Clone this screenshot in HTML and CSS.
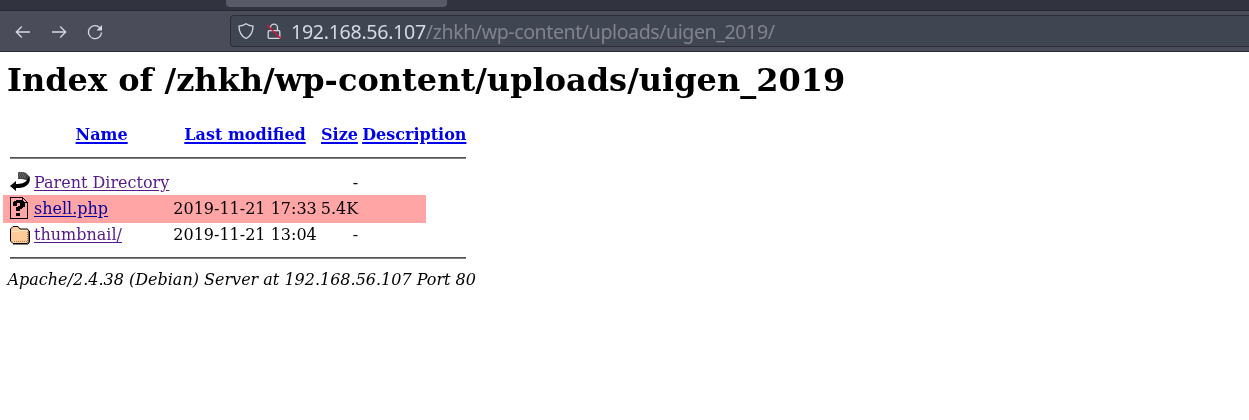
FILE: index.html
```html
<!DOCTYPE html>
<html lang="en">
<head>
<meta charset="utf-8">
<title>Index of /zhkh/wp-content/uploads/uigen_2019</title>
<link rel="stylesheet" href="styles.css">
</head>
<body>
<header class="chrome">
  <div class="tabs"><div class="tab"></div></div>
  <div class="toolbar">
    <nav class="nav">
      <svg class="nav-icon" viewBox="0 0 16 16"><path d="M15 8H1.500M6.800 2.500 1.300 8l5.500 5.500"/></svg>
      <svg class="nav-icon" viewBox="0 0 16 16"><path d="M1 8h13.500M9.200 2.500 14.700 8l-5.500 5.500"/></svg>
      <svg class="nav-icon" viewBox="0 0 16 16"><path d="M12.800 3.800A6.500 6.500 0 1 0 14.500 8.500"/><path class="solid" d="M15 1v5.500H9.500z"/></svg>
    </nav>
    <div class="urlbar">
      <svg class="url-icon shield" viewBox="0 0 16 16"><path d="M8 .8C6 2.200 3.600 3 1 3.200c0 5.500 1.500 9.500 7 12.300 5.500-2.800 7-6.800 7-12.300C12.400 3 10 2.200 8 .8z"/></svg>
      <svg class="url-icon lock" viewBox="0 0 16 16"><path d="M4.500 4.700a3.500 3.500 0 0 1 7 0v2.800M3.200 7.700h9.600q1 0 1 1v5.600q0 1-1 1H3.200q-1 0-1-1V8.700q0-1 1-1z"/><path class="strike" d="M1.300 2.300 15 15.800"/></svg>
      <span class="url"><span class="host">192.168.56.107</span><span class="path">/zhkh/wp-content/uploads/uigen_2019/</span></span>
    </div>
  </div>
</header>
<main class="page">
  <h1 class="title">Index of /zhkh/wp-content/uploads/uigen_2019</h1>
  <table class="listing">
    <tr><th><div class="icon"></div></th><th><a class="link" href="#">Name</a></th><th><a class="link" href="#">Last modified</a></th><th><a class="link" href="#">Size</a></th><th><a class="link" href="#">Description</a></th></tr>
    <tr><th colspan="5"><hr class="rule"></th></tr>
    <tr>
      <td><svg class="icon" viewBox="0 0 20 22"><path d="M8 1h5l3 1 3 3v5l-3-1-4-1H8z" fill="#444"/><path d="M8 2h1M10 2h1M12 2h1M9 4h1M11 4h1M13 4h1M15 4h1M8 6h1M10 6h1M12 6h1M14 6h1" stroke="#888"/><path d="M0 15l6-5v3c5 0 9-1 11-4l2.500-4c1.500 7-2 12-13.500 12v3z"/></svg></td>
      <td><a class="link visited" href="#">Parent Directory</a></td><td></td><td class="num">&nbsp; - </td><td></td>
    </tr>
    <tr>
      <td><svg class="icon" viewBox="0 0 20 22" shape-rendering="crispEdges"><path d="M.5.500h12l5 5v16H.5zM12.500.5v5h5" fill="#fff" stroke="#000"/><path d="M3 5h1V4h2V3h6v1h2v1h1v5h-2v1h-1v1h-2v2H6v-4h2V9h2V6H7v3H3zM6 16h4v3H6z"/></svg></td>
      <td><a class="link" href="#">shell.php</a></td><td class="num">2019-11-21 17:33</td><td class="num">5.4K</td><td></td>
    </tr>
    <tr>
      <td><svg class="icon" viewBox="0 0 20 22"><path d="M.5 6 3 3.500h5L10 6h7.500L19 8v10.500L17 20.500H3L.5 18z" fill="#fc9" stroke="#000"/><path d="M2 8.500h6l2-1h7" fill="none" stroke="#ffe8c8"/><path d="M17.500 9v9.500H4" fill="none" stroke="#b87840" stroke-dasharray="1 1"/><path d="M19.500 8v11L18 21H3" fill="none" stroke="#000"/></svg></td>
      <td><a class="link visited" href="#">thumbnail/</a></td><td class="num">2019-11-21 13:04</td><td class="num">&nbsp; - </td><td></td>
    </tr>
    <tr><th colspan="5"><hr class="rule"></th></tr>
  </table>
  <address class="signature">Apache/2.4.38 (Debian) Server at 192.168.56.107 Port 80</address>
  <div class="highlight"></div>
</main>
</body>
</html>
```
FILE: styles.css
```css
body { margin: 0; background: #fff; color: #000; font: 16px "DejaVu Serif", serif; overflow: hidden; }
.chrome { height: 52px; box-sizing: border-box; border-bottom: 1px solid #2b2c38; background: #4a4d59; }
.tabs { height: 11px; box-sizing: border-box; border-bottom: 1px solid #252731; background: #31343f; padding-left: 226px; }
.tab { width: 221px; height: 7px; background: #595a67; border-radius: 0 0 4px 4px; }
.toolbar { display: flex; height: 40px; box-sizing: border-box; padding-top: 4px; }
.nav { display: flex; gap: 20px; width: 230px; padding: 9px 0 0 15px; box-sizing: border-box; }
.nav-icon, .url-icon { width: 16px; height: 16px; fill: none; stroke: #d3dae3; stroke-width: 1.3; flex: none; }
.nav .solid { fill: #d3dae3; stroke: none; }
.urlbar { flex: 1; height: 32px; box-sizing: border-box; border: 1px solid #2b2e39; border-right: 0; border-radius: 4px 0 0 4px; background: #404552; display: flex; align-items: center; padding-left: 7px; }
.lock { margin-left: 12px; }
.url-icon .strike { stroke: #e2143f; }
.url { margin-left: 9px; padding-top: 1px; font: 19.6px/30px "Noto Sans", sans-serif; white-space: nowrap; }
.host { color: #d3dae3; letter-spacing: -.3px; }
.path { color: #80838f; letter-spacing: -.43px; }
.page { position: relative; padding: 9px 7px; }
.title { margin: 0 0 21px; font-size: 32px; line-height: 38px; font-weight: bold; white-space: nowrap; }
.listing { border-spacing: 2px; }
.listing th, .listing td { padding: 1px; white-space: nowrap; }
.icon { display: block; width: 20px; height: 22px; }
.rule { height: 2px; border: 0; border-top: 1px solid #555; background: #808080; box-sizing: border-box; }
.num { text-align: right; }
.link { color: #00e; text-decoration: underline; text-underline-offset: 2px; }
.listing th .link { text-decoration-thickness: 2px; }
.visited { color: #551a8b; }
.signature { font-style: italic; padding-left: .5px; }
.highlight { position: absolute; left: 3px; top: 143px; width: 423px; height: 28px; background: #ffa5a5; mix-blend-mode: multiply; }
```
